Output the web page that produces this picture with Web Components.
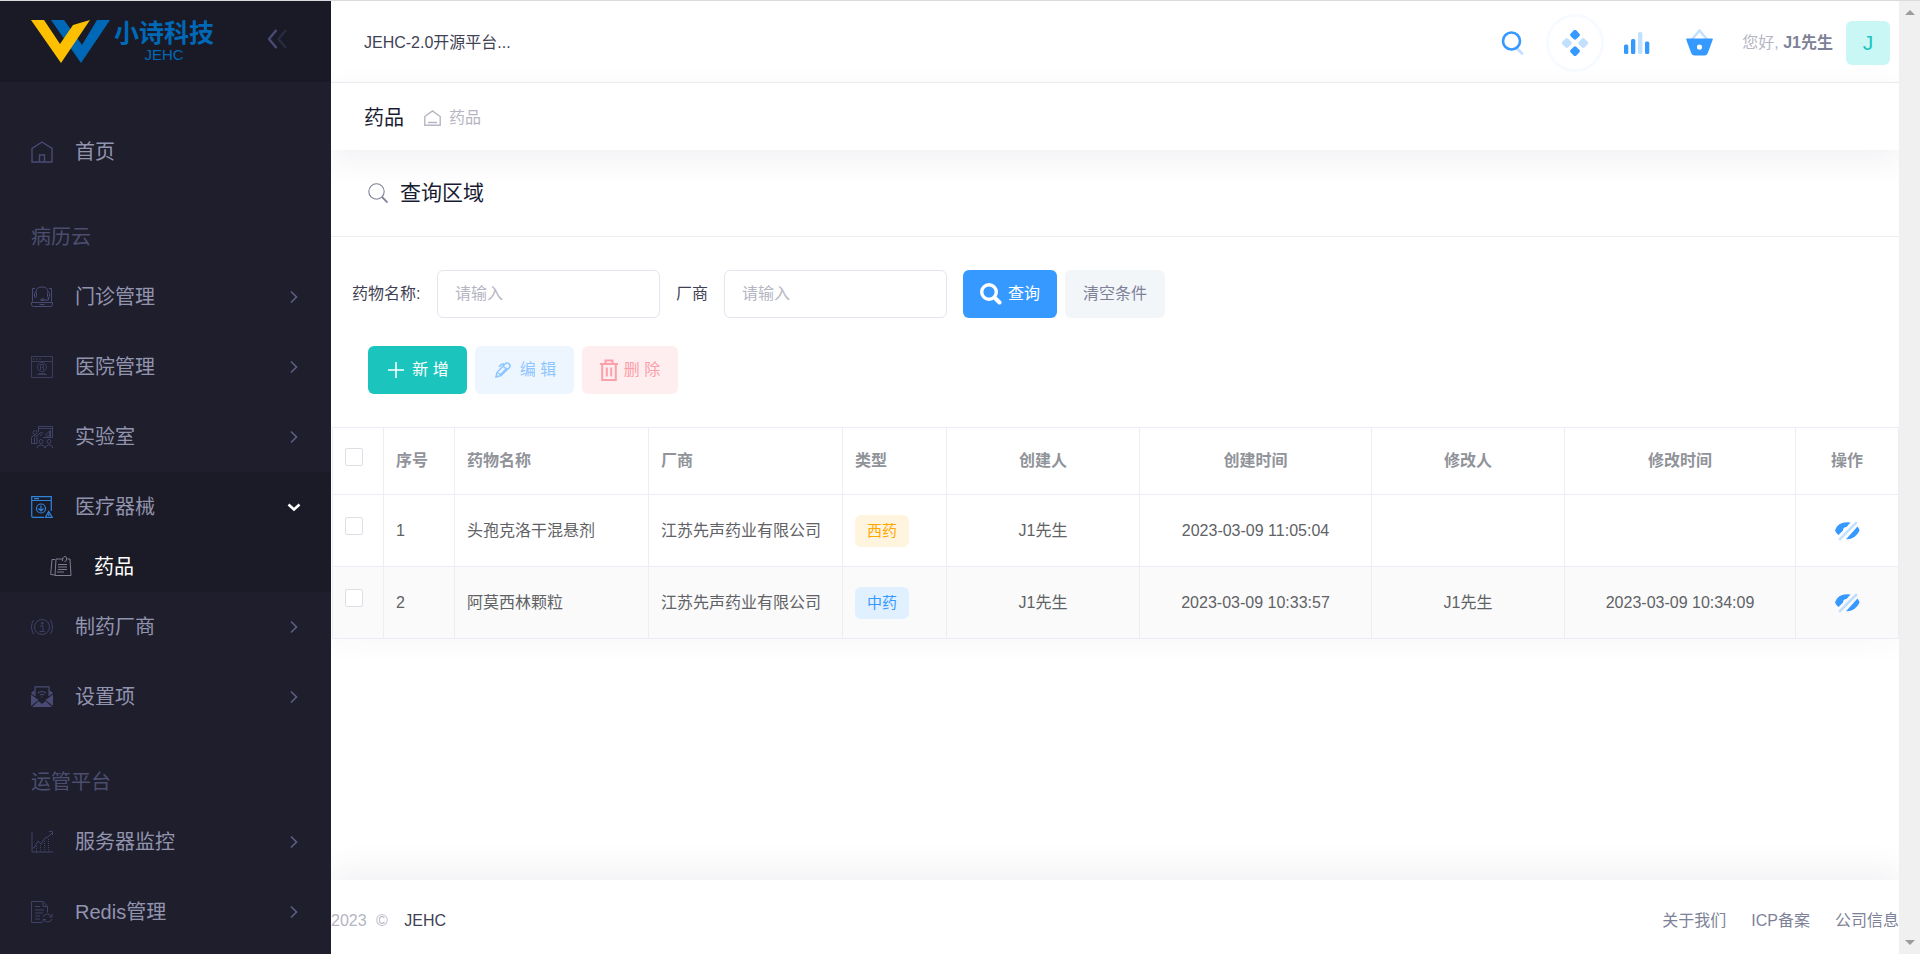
<!DOCTYPE html>
<html lang="zh-CN">
<head>
<meta charset="utf-8">
<meta name="viewport" content="width=device-width, initial-scale=1">
<title>JEHC 药品</title>
<style>
  html, body { margin: 0; height: 100%; }
  body {
    font-family: "Liberation Sans", "Noto Sans CJK SC", sans-serif;
    font-size: 16px; font-weight: 400; line-height: 24px; color: #3f4254; background: #fff;
  }
  *, *::before { box-sizing: border-box; }
</style>
</head>
<body>
<app-shell>
  <side-nav slot="nav">
    <nav-item icon="home" leaf>首页</nav-item>
    <nav-section>病历云</nav-section>
    <nav-item icon="headset">门诊管理</nav-item>
    <nav-item icon="hospital">医院管理</nav-item>
    <nav-item icon="lab">实验室</nav-item>
    <nav-item icon="device" open>医疗器械
      <nav-subitem slot="sub" icon="notes">药品</nav-subitem>
    </nav-item>
    <nav-item icon="info">制药厂商</nav-item>
    <nav-item icon="mail">设置项</nav-item>
    <nav-section>运管平台</nav-section>
    <nav-item icon="chart">服务器监控</nav-item>
    <nav-item icon="file">Redis管理</nav-item>
  </side-nav>
  <top-bar slot="top"></top-bar>
  <sub-header slot="top"></sub-header>
  <query-card>
    <query-form></query-form>
    <tool-buttons></tool-buttons>
    <drug-table></drug-table>
  </query-card>
  <page-footer slot="foot"></page-footer>
</app-shell>

<script>
const BASE = `*, *::before { box-sizing: border-box; }
a { color: inherit; text-decoration: none; }
button, input { font: inherit; }
button { border: 0; cursor: pointer; }`;

function define(name, html) {
  const tpl = document.createElement('template');
  customElements.define(name, class extends HTMLElement {
    constructor() {
      super();
      this.attachShadow({ mode: 'open' });
    }
    connectedCallback() {
      if (this.shadowRoot.childNodes.length) return;
      tpl.innerHTML = `<style>${BASE}</style>` + (typeof html === 'function' ? html(this) : html);
      this.shadowRoot.append(tpl.content.cloneNode(true));
    }
  });
}

const line = 'fill="none" stroke="currentColor"';
const ICONS = {
  home: `<g ${line} stroke-width="1.4"><path d="M1 21V7.500L11 1l10 6.500V21z"/><path d="M8.500 21v-7h5v7"/></g>`,
  headset: `<g ${line} stroke-width="1"><path d="M4 2.500H1.500v13M18 2.500h2.500v13M.5 16.500h21v2q0 2-2 2h-17q-2 0-2-2zM8.500 18.500h5"/><path d="M5 7V6q0-5 6-5t6 5v1M17.500 11v3h-4"/><rect x="3.500" y="6.500" width="2" height="5" rx="1"/><rect x="16.500" y="6.500" width="2" height="5" rx="1"/><path d="M10 13h3v1.500h-3z"/></g>`,
  hospital: `<g opacity=".7" ${line} stroke-width="1"><path d="M.5.5h21v21H.5zM.5 5.500h21M2 3h2M5 3h2M8 3h2M6 18.500h10M8 17.500h6"/><circle cx="11" cy="11" r="4.500"/><path d="M9.500 14V8.500h3v3h-2M12.500 11.500v3"/></g>`,
  lab: `<g opacity=".8" ${line} stroke-width="1"><path d="M7.500 6V.5h14v11H12M7.500 2.500h14M14.500 9l4-4v5h-4M19.500 4v7M9 10l3-4"/><circle cx="4" cy="6.500" r="2"/><path d="M.5 18v-6q0-2 2-2H6l4-4M.5 17.500h5.500V11M3.500 12v5"/><circle cx="10" cy="15.500" r="2"/><circle cx="18" cy="15.500" r="2"/><path d="M6.500 22v-1q0-2 3.500-2t3.500 2v1M14.500 22v-1q0-2 3.500-2t3.500 2v1"/></g>`,
  device: `<g ${line} stroke-width="1.200"><path d="M13 21.300H2q-1.300 0-1.300-1.300V.7h19.600V15M.7 4.500h19.600M3 2.600h5M14.500 21.300 17.700 15.500l3.500 5.800zM17.800 17.500v2.500"/><circle cx="10" cy="12.500" r="4.500"/><path d="M10 9.500v5.500M7.500 12.500l2.500 2.500 2.500-2.500"/></g>`,
  notes: `<g ${line} stroke-width="1"><path d="M5 3.500H2L.7 18.500 5 19M13 3H6L5 19.500h16L20 3h-2.500M12.500 5q0-4.500 2.500-4.500 2.500 0 1.500 3.500-.5 1.500-2 1.500M8 8.500h9M8 11h9M8 13.500h9M7 16h7"/></g>`,
  info: `<g opacity=".8" ${line} stroke-width="1"><circle cx="11" cy="11" r="7.500"/><path d="M2.500 4q-4 7 0 14M19.500 4q4 7 0 14M9 10h3v5M8.500 15.500h5M10.500 6.500h1.500v1.500h-1.500z"/></g>`,
  mail: `<path fill="currentColor" d="M0 8.500V20l7.500-6zM22 8.500V20l-7.500-6zM1 21h20l-6.500-6-3.500 3-3.500-3zM3.500 4v6L0 7zM18.500 4v6L22 7z"/><g ${line} stroke-width="1.200"><path d="M4 10V.9h14V10M7 7q4-3 8 0M9 9q2-1.500 4 0M10.500 11h1"/></g>`,
  chart: `<g opacity=".8" ${line} stroke-width="1"><path d="M1 1v20h21M1 17h2l4-7 3 3 4-6 3-1 4.500-4.500M18 .5h3.500V4"/><path stroke-dasharray="1 1" d="M5.500 15v7M9.500 14v8M13.500 10v12M17.500 8v14"/></g>`,
  file: `<g ${line} opacity=".8" stroke-width="1"><path d="M11 21.500H.5V.5h11.500l4.500 5v6M12 .5v5h4.500M4 5.500h5M4 9h9M4 12h8M4 15h5M4 18h5"/><path d="M12 16q1-3 4.500-3 2.500 0 3.500 2.500M21 13v3h-3M21 18q-1 3-4.500 3-2.500 0-3.500-2.500M12 21.500v-3h3"/></g>`,
  right: `<path ${line} stroke-width="1.700" d="m8 5.500 5.500 5.500L8 16.500"/>`,
  down: `<path ${line} stroke-width="2.600" d="m5.500 8.500 5.500 5 5.500-5"/>`,
  collapse: `<g ${line} stroke-width="2.400" stroke-linejoin="round"><path d="M10.500 2 3 11l7.500 9"/><path opacity=".35" d="M20 2l-7.500 9 7.500 9"/></g>`,
  search2: `<path ${line} opacity=".3" stroke-width="2.800" stroke-linecap="round" d="m16.500 18 4.500 4.500"/><circle ${line} stroke-width="2.600" cx="10.500" cy="10" r="8.500"/>`,
  diamonds: `<g fill="currentColor"><rect x="-4" y="-4" width="8" height="8" rx="2" transform="translate(13 4.800) rotate(45)"/><rect x="-4" y="-4" width="8" height="8" rx="2" transform="translate(13 21.200) rotate(45)"/><g opacity=".3"><rect x="-4" y="-4" width="8" height="8" rx="2" transform="translate(4.800 13) rotate(45)"/><rect x="-4" y="-4" width="8" height="8" rx="2" transform="translate(21.200 13) rotate(45)"/></g></g>`,
  bars: `<g fill="currentColor"><rect y="12.500" width="4.300" height="9.500" rx="1.500"/><rect x="7" y="7" width="4.300" height="15" rx="1.500"/><rect x="14" width="4.300" height="22" rx="1.500" opacity=".3"/><rect x="21" y="9.500" width="4.300" height="12.500" rx="1.500"/></g>`,
  basket: `<path ${line} opacity=".3" stroke-width="2.400" d="m5.500 11 8-9.500 8 9.500"/><path fill="currentColor" fill-rule="evenodd" d="M1 9.500h25q1 0 .8 1L22 23.500q-1 3-3.500 3h-10q-2.500 0-3.500-3L.2 10.500q-.2-1 .8-1zM13.500 15.500a2.600 2.600 0 1 0 0 5.200 2.600 2.600 0 1 0 0-5.200z"/>`,
  crumb: `<path ${line} stroke-width="1.400" d="M.8 15.300V6.500L8.500.9l7.700 5.600v8.800zM4 12.500h9"/>`,
  find: `<g ${line} stroke-width="1.100"><circle cx="8.500" cy="8.500" r="7.700"/><path stroke-width="1.800" d="m14 14 5.500 5.500"/></g>`,
  findBold: `<circle ${line} stroke-width="3.400" cx="9" cy="9" r="7.300"/><path ${line} stroke-width="4" stroke-linecap="round" d="m15 15 4.500 4.500"/>`,
  plus: `<path ${line} stroke-width="1.600" d="M8 0v16M0 8h16"/>`,
  edit: `<path ${line} stroke-width="1.500" d="M1 15l1-4.500 8-8.500q1.500-1.500 3.500-.5 2.500 1.500 1 4L6 13.500zM9 2q-3-.5-5 3M5.500 12.500 12 6M8.500 4.500l4 3.500M3 11l3 2"/>`,
  trash: `<g ${line} stroke-width="2"><path d="M0 5h18M2.200 5v16h13.600V5M5.500 4.500V1.500h7v3M6.800 8.500v9M11.200 8.500v9"/></g>`,
  hide: `<g fill="currentColor"><path d="M15.500 1.500Q3 0 0 9.500q1 2.500 3.500 4.500L8 9.500Q8 6 11.500 6z"/><path d="M22.500 5.500q1.500 2 2 4-4 9-13.500 8.700z"/><path opacity=".3" d="M21 .3 22.700 2 5 19.700 3.300 18z"/></g>`
};
define('ui-icon', el => {
  const [w, h] = el.getAttribute('size').split(' ');
  return `<style>:host { display: inline-flex; flex: none; } svg { display: block; }</style>
  <svg width="${w}" height="${h || w}" viewBox="0 0 ${w} ${h || w}" aria-hidden="true">${ICONS[el.getAttribute('name')]}</svg>`;
});

define('app-shell', `<style>
  :host { display: flex; height: 100vh; overflow: hidden; border-top: 1px solid #dadade; box-sizing: border-box; }
  ::slotted([slot=nav]) { flex: 0 0 331px; z-index: 3; }
  .page { flex: 1; min-width: 0; display: flex; flex-direction: column; overflow: hidden; }
  main { flex: 1; }
  .rail { flex: 0 0 21px; background: #f0f0f0; z-index: 3; display: flex; flex-direction: column; justify-content: space-between; align-items: center; padding: 9px 0; }
  .rail i { border: 5px solid transparent; border-top-width: 0; border-bottom-color: #9c9c9c; }
  .rail i + i { transform: rotate(180deg); }
</style>
<slot name="nav"></slot>
<div class="page"><slot name="top"></slot><main><slot></slot></main><slot name="foot"></slot></div>
<div class="rail"><i></i><i></i></div>`);

define('side-nav', `<style>
  :host { display: block; background: #1e1e2d; overflow: hidden; position: relative; }
  header { height: 81px; background: #1a1a27; display: flex; align-items: center; padding: 0 43px 0 31px; }
  .brand { display: flex; gap: 4px; color: #0069b7; }
  .word { text-align: center; }
  b { display: block; font: 700 25px/26px "Liberation Sans", "Noto Sans CJK SC", sans-serif; }
  span { display: block; font-size: 15px; line-height: 18px; }
  button { margin-left: auto; padding: 2px 0 0; background: none; color: #494b74; }
  nav { padding-top: 35px; }
</style>
<header><a class="brand" href="#"><svg width="79" height="44" viewBox="0 0 79 44" aria-hidden="true">
<path fill="#0069b7" d="M20 0h13l18 25L66 0h13L50 43z"/><path fill="#fcc000" d="M0 0h13l16 24L42 5l17-5L30 43z"/></svg>
<div class="word"><b>小诗科技</b><span>JEHC</span></div></a>
<button aria-label="收起菜单"><ui-icon name="collapse" size="22"></ui-icon></button></header>
<nav><slot></slot></nav>`);

define('nav-section', `<style>
  :host { display: block; margin-top: 25px; padding: 0 31px; font-size: 20px; line-height: 50px; color: #4c4e6f; }
</style><slot></slot>`);

define('nav-item', el => `<style>
  :host { display: block; font-size: 20px; color: #9294ad; }
  :host([open]) { background: #1b1b28; }
  a { display: flex; align-items: center; height: 70px; padding: 0 26px 0 31px; }
  .ic { color: #494b74; }
  :host([open]) .ic { color: #2f83da; }
  span { flex: 1; padding-left: 22px; }
  .ar { color: #5c5e81; }
  :host([open]) .ar { color: #fff; }
  :host([leaf]) .ar { display: none; }
</style>
<a href="#"><ui-icon class="ic" name="${el.getAttribute('icon')}" size="22"></ui-icon><span><slot></slot></span>
<ui-icon class="ar" name="${el.hasAttribute('open') ? 'down' : 'right'}" size="22"></ui-icon></a><slot name="sub"></slot>`);

define('nav-subitem', el => `<style>
  :host { display: block; color: #fff; }
  a { display: flex; align-items: center; height: 50px; padding-left: 50px; gap: 22px; }
  ui-icon { color: #7c7d90; }
</style><a href="#"><ui-icon name="${el.getAttribute('icon')}" size="22"></ui-icon><span><slot></slot></span></a>`);

define('top-bar', `<style>
  :host { display: flex; align-items: center; height: 82px; padding: 2px 9px 0 33px; border-bottom: 1px solid #ebedf3; background: #fff; z-index: 2; box-sizing: border-box; flex: none; }
  .tools { margin-left: auto; display: flex; align-items: center; color: #3699ff; }
  button { background: none; padding: 0; width: 58px; height: 58px; border-radius: 50%; color: inherit; display: flex; align-items: center; justify-content: center; margin-right: 4px; }
  .ring { border: 3px solid #f7fbff; }
  .hi { color: #b5b5c3; margin-left: 10px; }
  .hi b { color: #7e8299; font-weight: 700; }
  .av { width: 44px; height: 44px; margin-left: 13px; border-radius: 6px; background: #c9f7f5; color: #1bc5bd; font-size: 21px; line-height: 44px; text-align: center; }
</style>
<span>JEHC-2.0开源平台...</span>
<div class="tools">
<button aria-label="搜索"><ui-icon name="search2" size="24"></ui-icon></button>
<button class="ring" aria-label="应用"><ui-icon name="diamonds" size="26"></ui-icon></button>
<button aria-label="统计"><ui-icon name="bars" size="26 22"></ui-icon></button>
<button aria-label="购物篮"><ui-icon name="basket" size="27"></ui-icon></button>
<span class="hi">您好, <b>J1先生</b></span><a class="av" href="#">J</a></div>`);

define('sub-header', `<style>
  :host { display: flex; align-items: center; height: 67px; padding: 2px 33px 0; gap: 20px; background: #fff; z-index: 2; position: relative; box-shadow: 0 10px 30px 0 rgba(82,63,105,.08); flex: none; box-sizing: border-box; }
  h1 { margin: 0; font-size: 20px; font-weight: 400; color: #181c32; line-height: 30px; }
  a { display: flex; align-items: center; gap: 8px; color: #b5b5c3; }
</style><h1>药品</h1><a href="#"><ui-icon name="crumb" size="17 16"></ui-icon>药品</a>`);

define('query-card', `<style>
  :host { display: block; background: #fff; box-shadow: 0 0 30px 0 rgba(82,63,105,.05); }
  header { display: flex; align-items: center; height: 87px; padding: 0 37px; gap: 12px; border-bottom: 1px solid #ebedf3; color: #7e8299; }
  h2 { margin: 0; font-size: 21px; line-height: 30px; font-weight: 400; color: #181c32; }
</style><header><ui-icon name="find" size="20"></ui-icon><h2>查询区域</h2></header><slot></slot>`);

define('query-form', `<style>
  form { display: flex; align-items: center; gap: 16px; padding: 33px 21px 0; }
  label { width: 32px; white-space: nowrap; }
  .wide { width: 69px; }
  input { width: 223px; height: 48px; border: 1px solid #e4e6ef; border-radius: 6px; padding: 0 17px; outline: 0; color: #3f4254; background: #fff; }
  input::placeholder { color: #b5b5c3; opacity: 1; }
  .go { display: flex; gap: 8px; }
  button { display: flex; align-items: center; height: 48px; border-radius: 6px; padding: 0 17px; gap: 6px; background: #3699ff; color: #fff; }
  .clear { background: #f3f6f9; color: #7e8299; padding: 0 18px; }
</style>
<form><label class="wide" for="drug">药物名称:</label><input id="drug" placeholder="请输入">
<label for="maker">厂商</label><input id="maker" placeholder="请输入">
<div class="go"><button type="button"><ui-icon name="findBold" size="22"></ui-icon>查询</button><button type="button" class="clear">清空条件</button></div></form>`);

define('tool-buttons', `<style>
  :host { display: flex; gap: 8px; padding: 28px 37px 33px; }
  button { display: flex; align-items: center; justify-content: center; gap: 8px; height: 48px; width: 99px; border-radius: 6px; padding: 0 0 0 2px; background: #1bc5bd; color: #fff; }
  .edit { background: #edf6ff; color: #8dc5ff; }
  .del { background: #ffeef0; color: #fb9fa9; width: 96px; gap: 6px; padding: 0; }
</style>
<button><ui-icon name="plus" size="16"></ui-icon>新 增</button>
<button class="edit"><ui-icon name="edit" size="17 16"></ui-icon>编 辑</button>
<button class="del"><ui-icon name="trash" size="18 22"></ui-icon>删 除</button>`);

const WIDTHS = [51, 71, 194, 194, 104, 193, 232, 193, 231, 103];
const HEADS = ['序号', '药物名称', '厂商', '类型', '创建人', '创建时间', '修改人', '修改时间', '操作'];
const ROWS = [
  ['1', '头孢克洛干混悬剂', '江苏先声药业有限公司', '西药', 'J1先生', '2023-03-09 11:05:04', '', ''],
  ['2', '阿莫西林颗粒', '江苏先声药业有限公司', '中药', 'J1先生', '2023-03-09 10:33:57', 'J1先生', '2023-03-09 10:34:09']
];
const tag = t => `<span class="tag${t === '中药' ? ' blue' : ''}">${t}</span>`;
define('drug-table', `<style>
  :host { display: block; padding: 0 0 0 1px; }
  table { width: 100%; table-layout: fixed; border-collapse: separate; border-spacing: 0; border: 1px solid #ebeef5; border-width: 1px 0 0 1px; color: #606266; }
  th, td { height: 72px; padding: 0 12px; text-align: left; border: 1px solid #ebeef5; border-width: 0 1px 1px 0; white-space: nowrap; }
  th { height: 67px; color: #909399; font-weight: 700; }
  tbody tr:nth-child(2) { background: #fafafa; }
  th:nth-child(n+6), td:nth-child(n+6) { text-align: center; }
  th:first-child { padding: 0 0 8px 12px; }
  td:first-child { padding: 0 0 10px 12px; }
  input { appearance: none; display: block; margin: 0; width: 18px; height: 18px; border: 1px solid #dcdfe6; border-radius: 2px; background: #fff; }
  .tag { display: block; width: 54px; text-align: center; line-height: 32px; border-radius: 6px; background: #fff4de; color: #ffa800; font-size: 15px; }
  .blue { background: #e1f0ff; color: #3699ff; }
  a { color: #3699ff; display: flex; justify-content: center; }
</style>
<table><colgroup>${WIDTHS.map(w => `<col style="width:${w}px">`).join('')}</colgroup>
<thead><tr><th><input type="checkbox" aria-label="全选"></th>${HEADS.map(h => `<th>${h}</th>`).join('')}</tr></thead>
<tbody>${ROWS.map(r => `<tr><td><input type="checkbox" aria-label="选择 ${r[0]}"></td>${r.map((c, i) => `<td>${i === 3 ? tag(c) : c}</td>`).join('')}<td><a href="#" aria-label="查看"><ui-icon name="hide" size="25 20"></ui-icon></a></td></tr>`).join('')}</tbody></table>`);

define('page-footer', `<style>
  :host { display: flex; justify-content: space-between; align-items: center; height: 74px; padding-top: 8px; box-sizing: border-box; background: #fff; z-index: 2; position: relative; box-shadow: 0 -10px 30px 0 rgba(82,63,105,.08); flex: none; color: #b5b5c3; }
  .l a { color: #3f4254; margin-left: 12px; }
  .y { margin-right: 5px; }
  .r { display: flex; gap: 25px; color: #7e8299; }
</style>
<div class="l"><span class="y">2023</span> © <a href="#">JEHC</a></div>
<nav class="r"><a href="#">关于我们</a><a href="#">ICP备案</a><a href="#">公司信息</a></nav>`);
</script>
</body>
</html>
